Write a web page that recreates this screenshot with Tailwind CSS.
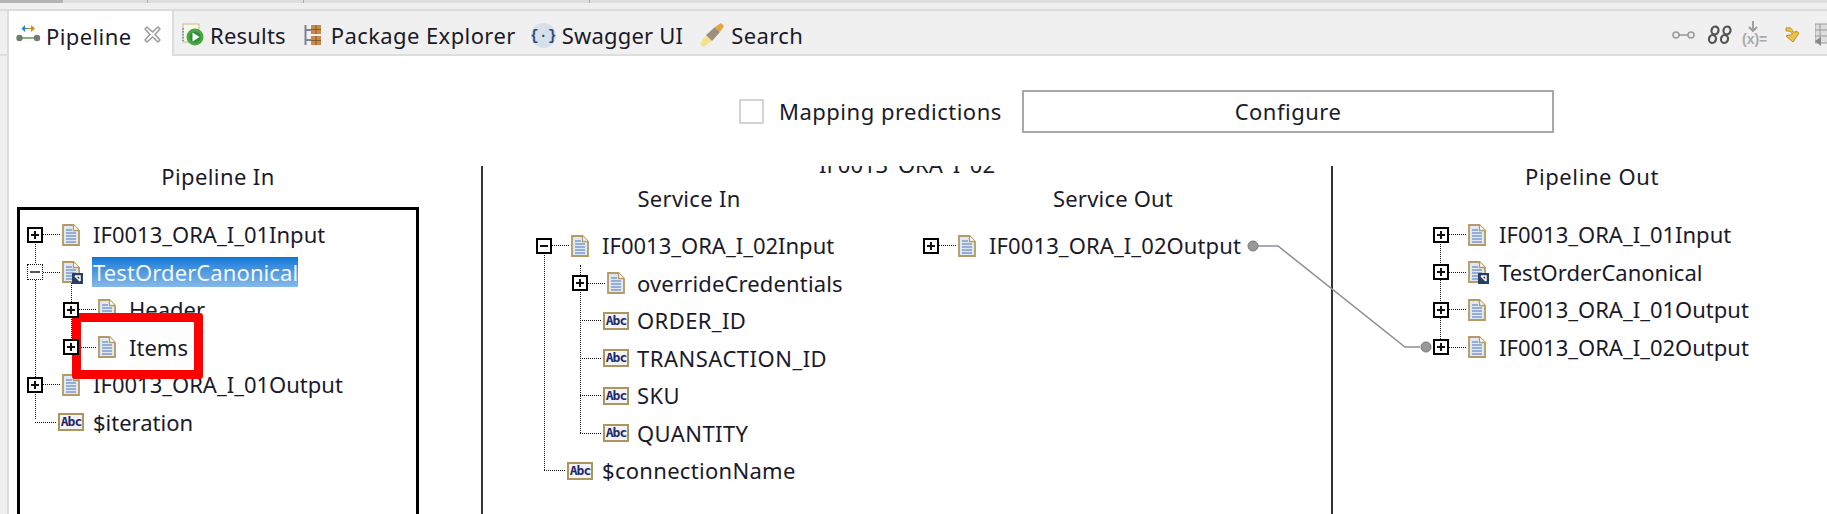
<!DOCTYPE html>
<html lang="en">
<head>
<meta charset="UTF-8">
<title>Pipeline</title>
<script src="https://cdn.jsdelivr.net/npm/@tailwindcss/browser@4"></script>
</head>
<body class="bg-white">
<svg width="0" height="0" class="absolute">
  <defs>
    <symbol id="doc" viewBox="0 0 18 22">
      <path d="M1 1h10.5l5.500 5.500V21H1z" fill="#dfe8f6" stroke="#b59a62" stroke-width="1.800"/>
      <path d="M11.500 1v5.500H17" fill="#fff" stroke="#b59a62" stroke-width="1.300"/>
      <path d="M4 6h6M4 9h10M4 12h10M4 15h10M4 18h10" stroke="#7f9ac8" stroke-width="1.400"/>
    </symbol>
    <symbol id="plus" viewBox="0 0 12 12">
      <path d="M2 6h8M6 2v8" stroke="#111" stroke-width="2"/>
    </symbol>
    <symbol id="minus" viewBox="0 0 12 12">
      <path d="M2 6h8" stroke="#111" stroke-width="2"/>
    </symbol>
  </defs>
</svg>

<div class="relative w-[1827px] h-[514px] overflow-hidden flex flex-col font-['Noto_Sans','Open_Sans',sans-serif] text-[22px] text-[#1a1a2a]">
  <!-- strip left over from the window above -->
  <div class="h-[11px] shrink-0 bg-[#f0f0f0] border-b-2 border-[#dcdcdc]">
    <div class="flex h-[3px] bg-[#dedede]">
      <div class="w-[63px] bg-[#b5b5b5]"></div>
      <div class="w-[85px] border-r border-[#aaaaaa]"></div>
      <div class="w-[156px] border-r border-[#aaaaaa]"></div>
      <div class="w-[286px] border-r border-[#aaaaaa]"></div>
    </div>
  </div>

  <!-- view tabs -->
  <div class="h-[45px] shrink-0 flex bg-[#f0f0f0] border-b-2 border-[#dedede] tracking-[0.4px]">
    <div class="w-[9px] shrink-0 border-r-2 border-[#dcdcdc]"></div>
    <div class="w-[165px] h-[45px] shrink-0 flex items-center bg-white border-r-2 border-[#dcdcdc] pl-[6px] pt-[5px]">
      <svg class="w-[26px] h-[20px] -mt-[4px]" viewBox="0 0 26 20">
        <path d="M4 14h18" stroke="#5aa84f" stroke-width="1.600"/>
        <circle cx="4.500" cy="14" r="3.200" fill="#777"/><circle cx="22" cy="14" r="3.200" fill="#777"/>
        <path d="M12 5H8V2L4.500 5.500 8 9V6h4z" fill="#1f86d0" transform="translate(2 -1)"/>
        <path d="M13 5h3V2l4 3.500L16 9V6h-3z" fill="#d98a1f" transform="translate(0 -1)"/>
      </svg>
      <span class="ml-[5px]">Pipeline</span>
      <svg class="w-[17px] h-[17px] ml-[13px] -mt-[4px]" viewBox="0 0 17 17">
        <path d="M3 1l5.500 5L14 1l2 2-5 5.500 5 5.500-2 2-5.500-5L3 16l-2-2 5-5.500L1 3z" fill="#fff" stroke="#9a9a9a" stroke-width="1.400"/>
      </svg>
    </div>
    <div class="flex items-center ml-[8px] pt-[5px]">
      <svg class="w-[22px] h-[24px]" viewBox="0 0 22 24">
        <rect x="1" y="1" width="16" height="18" fill="#f8f6ea" stroke="#c9bb85"/>
        <path d="M1 5v13" stroke="#7d9ac4" stroke-width="2" stroke-dasharray="1.500 1.500"/>
        <circle cx="13" cy="14" r="8.500" fill="#4aa642"/>
        <circle cx="13" cy="14" r="5.500" fill="#2f8f3a"/>
        <path d="M10.500 9.500l7 4.500-7 4.500z" fill="#fff"/>
      </svg>
      <span class="ml-[6px] tracking-[0.2px]">Results</span>
      <svg class="w-[18px] h-[24px] ml-[18px]" viewBox="0 0 18 24">
        <path d="M1.500 2v20M1.500 7h6M1.500 17h6" stroke="#7c8494" stroke-width="2"/>
        <rect x="7" y="2" width="10" height="9" fill="#c88a4a"/>
        <rect x="7" y="13" width="10" height="9" fill="#c88a4a"/>
        <path d="M7 6.500h10M12 2v9M7 17.500h10M12 13v9" stroke="#8a5a2a"/>
      </svg>
      <span class="ml-[9px]">Package Explorer</span>
      <svg class="w-[25px] h-[25px] ml-[15px]" viewBox="0 0 25 25">
        <circle cx="12.500" cy="12.500" r="12.500" fill="#d6e0ea"/>
        <text x="12.500" y="17" text-anchor="middle" font-family="Liberation Mono" font-size="14" font-weight="700" fill="#2c4a72">{·}</text>
      </svg>
      <span class="ml-[6px] tracking-[0.2px]">Swagger UI</span>
      <svg class="w-[26px] h-[26px] ml-[16px]" viewBox="0 0 26 26">
        <path d="M1 22l6-9 6 6-9 6z" fill="#f7e08a"/>
        <path d="M7 13l9-8 5 5-8 9z" fill="#9c8f7c"/>
        <path d="M16 5l6-4 3 3-4 6z" fill="#e3a73a"/>
      </svg>
      <span class="ml-[6px]">Search</span>
    </div>
    <div class="ml-auto flex items-center pt-[4px] tracking-normal">
      <svg class="w-[23px] h-[12px]" viewBox="0 0 23 12">
        <path d="M7 6h9" stroke="#999" stroke-width="1.500"/>
        <circle cx="4" cy="6" r="3" fill="#eee" stroke="#999" stroke-width="1.500"/>
        <circle cx="19" cy="6" r="3" fill="#eee" stroke="#999" stroke-width="1.500"/>
      </svg>
      <svg class="w-[26px] h-[20px] ml-[11px]" viewBox="0 0 26 20" fill="none" stroke="#555" stroke-width="2.200">
        <ellipse cx="9" cy="5.500" rx="3.500" ry="4" transform="rotate(15 9 5.500)"/>
        <ellipse cx="6.500" cy="14" rx="3.500" ry="4" transform="rotate(15 6.500 14)"/>
        <ellipse cx="21" cy="5.500" rx="3.500" ry="4" transform="rotate(15 21 5.500)"/>
        <ellipse cx="18.500" cy="14" rx="3.500" ry="4" transform="rotate(15 18.500 14)"/>
      </svg>
      <div class="relative w-[26px] h-[27px] ml-[10px]">
        <svg class="absolute left-[5px] top-0 w-[12px] h-[12px]" viewBox="0 0 12 12"><path d="M6 0v10M2 6l4 4 4-4" fill="none" stroke="#999" stroke-width="1.800"/></svg>
        <span class="absolute left-0 top-[10px] text-[14px] leading-[17px] font-['Liberation_Sans'] font-bold text-[#aaaaaa] whitespace-nowrap">(x)=</span>
      </div>
      <svg class="w-[15px] h-[18px] ml-[17px]" viewBox="0 0 15 18">
        <path d="M1 2c4-1 6 0 7 4h3v-1l3 2-6 9-7-6 3-1h3C8 6 5 5 1 5z" fill="#eec24a" stroke="#b98f24"/>
      </svg>
      <svg class="w-[12px] h-[24px] ml-[15px]" viewBox="0 0 12 24">
        <rect x="0" y="1" width="14" height="19" fill="#ddd" stroke="#999"/>
        <path d="M0 7h12M0 13h12M5 1v19" stroke="#999"/>
        <path d="M0 18l6 5v-9z" fill="#888"/>
      </svg>
    </div>
  </div>

  <div class="flex-1 flex min-h-0">
    <div class="w-[9px] shrink-0 bg-[#f0f0f0] border-r-2 border-[#dcdcdc]"></div>
    <div class="flex-1 min-w-0 flex flex-col">

      <!-- mapping predictions -->
      <div class="h-[110px] shrink-0 flex items-start pt-[34px] pl-[730px] tracking-[0.5px]">
        <div class="w-[25px] h-[25px] mt-[9px] border-2 border-[#d4d4d4] bg-white"></div>
        <span class="ml-[15px] w-[243px] leading-[43px]">Mapping predictions</span>
        <div class="w-[532px] h-[43px] border-2 border-[#a8a8a8] flex items-center justify-center">Configure</div>
      </div>

      <div class="flex-1 flex min-h-0">
        <!-- pipeline in -->
        <div class="w-[472px] shrink-0 flex flex-col">
          <div class="w-[418px] h-[22px] -mt-[1px] leading-[22px] text-center tracking-[0.4px]">Pipeline In</div>
          <div class="relative w-[402px] h-[320px] mt-[20px] ml-[8px] border-[3px] border-b-0 border-black pt-[6px]" id="treeIn"></div>
        </div>

        <!-- service -->
        <div class="w-[850px] shrink-0 border-l-2 border-[#333333] flex flex-col">
          <div class="h-[9px] overflow-hidden flex justify-center items-end">
            <span class="leading-[22px] whitespace-nowrap">IF0013_ORA_I_02</span>
          </div>
          <div class="flex gap-[12px] mt-[12px]">
            <div class="w-[412px]">
              <div class="h-[22px] leading-[22px] text-center tracking-[0.3px]">Service In</div>
              <div class="relative mt-[18px]" id="treeService"></div>
            </div>
            <div class="w-[412px]">
              <div class="h-[22px] leading-[22px] text-center tracking-[0.2px]">Service Out</div>
              <div class="relative mt-[18px]" id="treeServiceOut"></div>
            </div>
          </div>
        </div>

        <!-- pipeline out -->
        <div class="flex-1 min-w-0 border-l-2 border-[#333333]">
          <div class="w-[518px] h-[22px] -mt-[1px] leading-[22px] text-center tracking-[0.6px]">Pipeline Out</div>
          <div class="relative mt-[29px]" id="treeOut"></div>
        </div>
      </div>
    </div>
  </div>

  <!-- wire between service out and pipeline out -->
  <svg class="absolute left-0 top-0 w-[1827px] h-[514px] pointer-events-none" viewBox="0 0 1827 514">
    <path d="M1258 246H1278L1405 347H1420" fill="none" stroke="#8a8f96" stroke-width="1.500"/>
    <circle cx="1253" cy="246" r="5" fill="#999" stroke="#777"/>
    <circle cx="1426" cy="347" r="5" fill="#999" stroke="#777"/>
  </svg>

  <!-- red marker -->
  <div class="absolute left-[72px] top-[313px] w-[131px] h-[66px] border-[9px] border-[#ff0000] rounded-[3px]"></div>
</div>

<script>
  const plusBox = `<span class="w-[16px] h-[16px] shrink-0 border-2 border-black bg-white z-10"><svg class="w-[12px] h-[12px]"><use href="#plus"/></svg></span>`;
  const minusBox = `<span class="w-[16px] h-[16px] shrink-0 border-2 border-black bg-white z-10"><svg class="w-[12px] h-[12px]"><use href="#minus"/></svg></span>`;
  const focusBox = `<span class="w-[16px] h-[16px] shrink-0 border border-dotted border-[#111111] bg-white z-10 flex items-center justify-center"><span class="w-[10px] h-[2px] bg-[#555555]"></span></span>`;
  const abcIcon = `<span class="w-[26px] h-[18px] shrink-0 border-2 border-[#ab9660] bg-[#f3f3f8] text-[#20286a] text-[13px] leading-[14px] text-center font-['DejaVu_Sans_Mono'] font-bold tracking-[-1px]">Abc</span>`;
  const docIcon = `<svg class="w-[18px] h-[22px] shrink-0"><use href="#doc"/></svg>`;
  const linkIcon = `<span class="relative w-[18px] h-[22px] shrink-0"><svg class="w-[18px] h-[22px]"><use href="#doc"/></svg><svg class="absolute left-[10px] top-[12px] w-[11px] h-[11px]" viewBox="0 0 11 11"><rect width="11" height="11" fill="#2a3f66"/><path d="M3 3h5v5M8 8L3 3" stroke="#fff" stroke-width="1.500" fill="none"/></svg></span>`;
  const stub = w => `<span class="border-t border-dotted border-[#111111] shrink-0" style="width:${w}px"></span>`;

  // indent = offset of the row's first item, gap = space before the label
  function row(indent, head, stubW, icon, label, gap, extra = '') {
    return `<div class="h-[37.5px] flex items-center whitespace-nowrap" style="padding-left:${indent}px">
      ${head}${stub(stubW)}<span class="ml-[2px] flex shrink-0">${icon}</span>
      <span class="${extra}" style="margin-left:${gap}px">${label}</span>
    </div>`;
  }
  const vline = (x, y, h) => `<span class="absolute border-l border-dotted border-[#111111]" style="left:${x}px;top:${y}px;height:${h}px"></span>`;

  document.getElementById('treeIn').innerHTML =
    vline(15, 19, 190) + vline(51, 57, 75) +
    row(7, plusBox, 17, docIcon, 'IF0013_ORA_I_01Input', 13) +
    row(7, focusBox, 17, linkIcon, 'TestOrderCanonical', 12,
      'bg-gradient-to-b from-[#0078d7] to-[#84b9e8] text-[#f2f7fc] leading-[30px] pl-[1px] tracking-[0.1px]') +
    row(43, plusBox, 17, docIcon, 'Header', 13) +
    row(43, plusBox, 17, docIcon, 'Items', 13) +
    row(7, plusBox, 17, docIcon, 'IF0013_ORA_I_01Output', 13) +
    row(15, '', 21, abcIcon, '$iteration', 9);

  document.getElementById('treeService').innerHTML =
    vline(61, 18, 225) + vline(97, 38, 168) +
    row(53, minusBox, 17, docIcon, 'IF0013_ORA_I_02Input', 13) +
    row(89, plusBox, 17, docIcon, 'overrideCredentials', 12, 'tracking-[0.15px]') +
    row(97, '', 21, abcIcon, 'ORDER_ID', 8, 'tracking-[0.4px]') +
    row(97, '', 21, abcIcon, 'TRANSACTION_ID', 8, 'tracking-[0.5px]') +
    row(97, '', 21, abcIcon, 'SKU', 8, 'tracking-[0.4px]') +
    row(97, '', 21, abcIcon, 'QUANTITY', 8, 'tracking-[0.4px]') +
    row(61, '', 21, abcIcon, '$connectionName', 9, 'tracking-[0.3px]');

  document.getElementById('treeServiceOut').innerHTML =
    row(16, plusBox, 17, docIcon, 'IF0013_ORA_I_02Output', 13, 'tracking-[0.1px]');

  document.getElementById('treeOut').innerHTML =
    vline(107, 18, 113) +
    row(100, plusBox, 17, docIcon, 'IF0013_ORA_I_01Input', 13) +
    row(100, plusBox, 17, linkIcon, 'TestOrderCanonical', 13) +
    row(100, plusBox, 17, docIcon, 'IF0013_ORA_I_01Output', 13) +
    row(100, plusBox, 17, docIcon, 'IF0013_ORA_I_02Output', 13);
</script>
</body>
</html>
